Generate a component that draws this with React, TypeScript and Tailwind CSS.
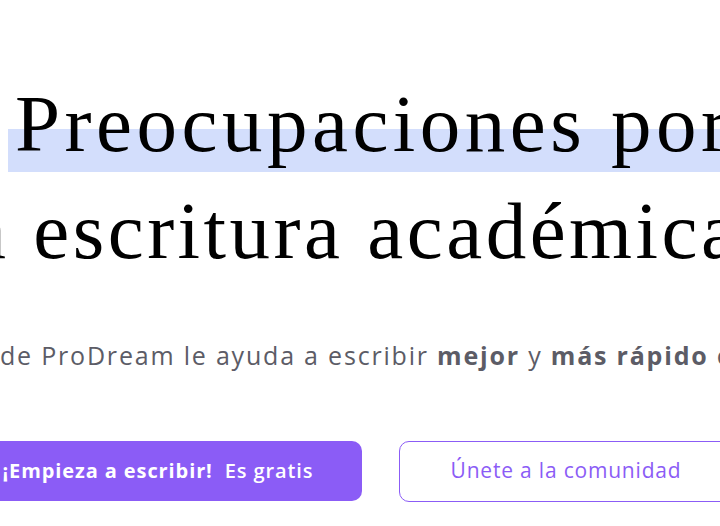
export default function App() {
  return (
    <div className="h-[526px] w-[720px] overflow-hidden bg-white">
      {/* Headline */}
      <div
        className="whitespace-nowrap pt-[71px] text-[81px] leading-[106px] tracking-[4.5px] text-black"
        style={{ fontFamily: '"Liberation Serif", "Times New Roman", serif' }}
      >
        <div className="pl-[8px]">
          <span className="relative inline-block pl-[7px]">
            <span className="absolute left-0 right-[-200px] top-[58px] h-[43px] bg-[#d3defc]" />
            <span className="relative">Preocupaciones por la</span>
          </span>
        </div>
        <div className="ml-[-56px] mt-[1px] tracking-[3.5px]">la escritura académica</div>
      </div>

      {/* Subtitle */}
      <p
        className="mt-[53px] whitespace-nowrap text-[25px] tracking-[1.8px] text-[#5c5c66]"
        style={{ fontFamily: '"Open Sans", "DejaVu Sans", sans-serif' }}
      >
        de ProDream le ayuda a escribir <b className="font-bold">mejor</b> y{" "}
        <b className="font-bold">más rápido</b> con IA
      </p>

      {/* Buttons */}
      <div
        className="ml-[-46px] mt-[66px] flex gap-[37px] whitespace-nowrap"
        style={{ fontFamily: '"Open Sans", "DejaVu Sans", sans-serif' }}
      >
        <button className="flex h-[60px] w-[408px] shrink-0 items-center justify-center rounded-[10px] bg-[#8b5cf6] text-[20px] tracking-[0.9px] text-white">
          <span className="font-bold">¡Empieza a escribir!</span>
          <span className="ml-[12px] font-semibold">Es gratis</span>
        </button>
        <button className="flex h-[61px] w-[334px] shrink-0 items-center justify-center rounded-[10px] border border-[#8b5cf6] bg-white text-[21px] tracking-[0.8px] text-[#8b5cf6]">
          Únete a la comunidad
        </button>
      </div>
    </div>
  )
}
